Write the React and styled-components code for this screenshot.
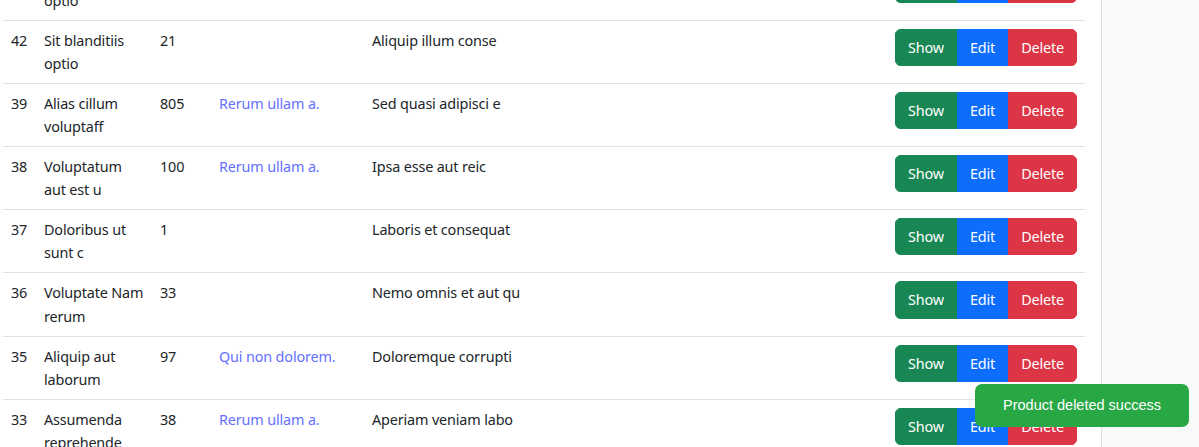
import React from "react";
import styled, { createGlobalStyle } from "styled-components";

const GlobalStyle = createGlobalStyle`
  html, body {
    margin: 0;
    padding: 0;
    background: #f8f9fa;
    height: 100%;
    overflow: hidden;
  }
  body {
    font-family: "Noto Sans", "Open Sans", sans-serif;
    font-size: 14.4px;
    line-height: 1.6;
    letter-spacing: -0.15px;
    color: #212529;
  }
`;

const Page = styled.div`
  display: flex;
  height: 100vh;
  overflow: hidden;
`;

const Content = styled.main`
  width: 1082px;
  flex: 0 0 auto;
  background: #fff;
  border-right: 1px solid #dcdde0;
  padding: 0 16px 0 3px;
`;

const Scroller = styled.div`
  margin-top: -42px;
`;

const Table = styled.table`
  width: 100%;
  border-collapse: collapse;
  table-layout: fixed;
`;

const Row = styled.tr`
  border-bottom: 1px solid #dee2e6;
`;

const Cell = styled.td`
  padding: 8px;
  vertical-align: top;
  width: ${(p) => p.$w || "auto"};
  text-align: ${(p) => (p.$right ? "right" : "left")};
  height: 46px;
`;

const CatLink = styled.a`
  color: #6471ff;
  text-decoration: none;
`;

const Group = styled.div`
  display: inline-flex;
  border-radius: 6px;
  overflow: hidden;
  vertical-align: top;
`;

const colors = { show: "#198754", edit: "#0d6efd", del: "#dc3545" };

const Btn = styled.button`
  font: inherit;
  letter-spacing: inherit;
  color: #fff;
  border: 1px solid ${(p) => colors[p.$kind]};
  background: ${(p) => colors[p.$kind]};
  padding: 6px 12px;
  line-height: 1.6;
  cursor: pointer;
`;

const Toast = styled.div`
  position: fixed;
  right: 10px;
  bottom: 20px;
  width: 214px;
  height: 43px;
  border-radius: 7px;
  background: #28a745;
  color: #fff;
  font-family: "Liberation Sans", Arial, sans-serif;
  font-size: 14.5px;
  letter-spacing: 0;
  display: flex;
  align-items: center;
  justify-content: center;
`;

const products = [
  { id: 43, name: "Ipsum dolor optio", price: 12, cat: "", desc: "Velit esse quia" },
  { id: 42, name: "Sit blanditiis optio", price: 21, cat: "", desc: "Aliquip illum conse" },
  { id: 39, name: "Alias cillum voluptaff", price: 805, cat: "Rerum ullam a.", desc: "Sed quasi adipisci e" },
  { id: 38, name: "Voluptatum aut est u", price: 100, cat: "Rerum ullam a.", desc: "Ipsa esse aut reic" },
  { id: 37, name: "Doloribus ut sunt c", price: 1, cat: "", desc: "Laboris et consequat" },
  { id: 36, name: "Voluptate Nam rerum", price: 33, cat: "", desc: "Nemo omnis et aut qu" },
  { id: 35, name: "Aliquip aut laborum", price: 97, cat: "Qui non dolorem.", desc: "Doloremque corrupti" },
  { id: 33, name: "Assumenda reprehende", price: 38, cat: "Rerum ullam a.", desc: "Aperiam veniam labo" },
];

export default function App() {
  return (
    <>
      <GlobalStyle />
      <Page>
        <Content>
          <Scroller>
            <Table>
              <tbody>
                {products.map((p) => (
                  <Row key={p.id}>
                    <Cell $w="17px">{p.id}</Cell>
                    <Cell $w="100px">{p.name}</Cell>
                    <Cell $w="43px">{p.price}</Cell>
                    <Cell $w="137px">{p.cat && <CatLink href="#">{p.cat}</CatLink>}</Cell>
                    <Cell $w="284px">{p.desc}</Cell>
                    <Cell $right>
                      <Group>
                        <Btn $kind="show">Show</Btn>
                        <Btn $kind="edit">Edit</Btn>
                        <Btn $kind="del">Delete</Btn>
                      </Group>
                    </Cell>
                  </Row>
                ))}
              </tbody>
            </Table>
          </Scroller>
        </Content>
      </Page>
      <Toast>Product deleted success</Toast>
    </>
  );
}
